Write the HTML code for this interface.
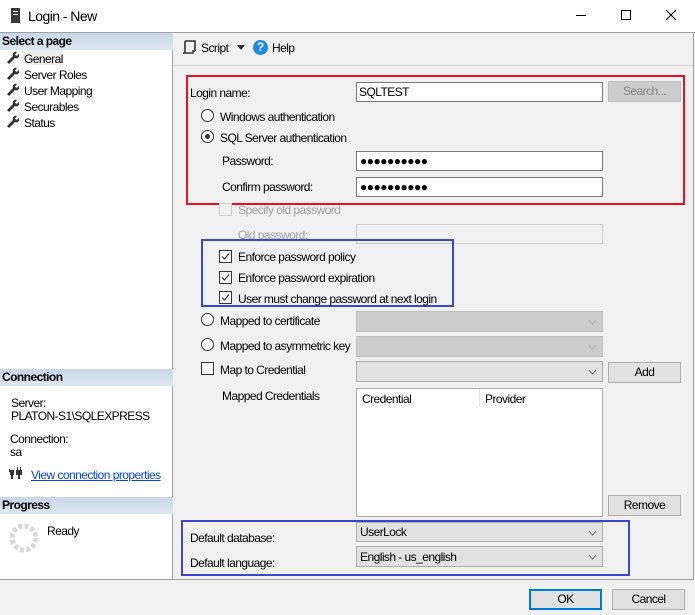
<!DOCTYPE html>
<html><head><style>
*{margin:0;padding:0;box-sizing:border-box}
body{width:695px;height:615px;overflow:hidden;background:#f0f0f0;font-family:"Liberation Sans",sans-serif;font-size:12px;color:#000;position:relative;letter-spacing:-0.55px}
.a{position:absolute;white-space:nowrap}
.t{position:absolute;white-space:nowrap;line-height:14px;margin-top:1px}
.inp{position:absolute;background:#fff;border:1px solid #7a7a7a}
.dis{position:absolute;background:#f0f0f0;border:1px solid #ccc}
.cmb{position:absolute;background:#e1e1e1;border:1px solid #adadad}
.cmbd{position:absolute;background:#cccccc;border:1px solid #bfbfbf}
.btn{position:absolute;background:#e1e1e1;border:1px solid #adadad;text-align:center;line-height:19px}
.rad{position:absolute;width:13px;height:13px;border:1px solid #333;border-radius:50%;background:#fff}
.chk{position:absolute;width:13px;height:13px;border:1px solid #333;background:#fff}
.hdr{position:absolute;left:0;width:173px;height:17px;background:linear-gradient(#c6d7e8,#dde7f1);font-weight:bold;padding-left:2px;line-height:17px}
.arr{position:absolute;right:6px;top:5px;width:7px;height:7px;border-right:1px solid #555;border-bottom:1px solid #555;transform:rotate(45deg) scale(.8)}
</style></head><body>
<div class="a" style="left:0;top:0;width:695px;height:33px;background:#fff;border-bottom:1px solid #a0a0a0"></div>
<div class="a" style="left:11px;top:8px;width:9px;height:15px;background:#3a3a3a"></div>
<div class="a" style="left:13px;top:11px;width:5px;height:1px;background:#fff"></div>
<div class="a" style="left:13px;top:14px;width:5px;height:1px;background:#fff"></div>
<div class="t" style="left:28px;top:7px;font-size:14px;line-height:16px">Login - New</div>
<div class="a" style="left:576px;top:15px;width:10px;height:1px;background:#000"></div>
<div class="a" style="left:621px;top:10px;width:10px;height:10px;border:1px solid #000"></div>
<svg class="a" style="left:665px;top:9px" width="12" height="12"><path d="M1 1L11 11M11 1L1 11" stroke="#000" stroke-width="1.1"/></svg>

<div class="a" style="left:0;top:33px;width:173px;height:546px;background:#fff;border-right:1px solid #a0a0a0"></div>
<div class="hdr" style="top:33px">Select a page</div>
<div class="a" style="left:22px;top:50px;width:41px;height:15px;background:#eeeeee"></div>
<div class="t" style="left:24px;top:51px">General</div>
<div class="t" style="left:24px;top:67px">Server Roles</div>
<div class="t" style="left:24px;top:83px">User Mapping</div>
<div class="t" style="left:24px;top:99px">Securables</div>
<div class="t" style="left:24px;top:115px">Status</div>
<svg class="a" style="left:6px;top:51px" width="13" height="80">
<g fill="#333"><path d="M1 11L7 5A3 3 0 0 1 11 1L9 3.5L10.5 5L13 3A3 3 0 0 1 9 7L3 13Z"/>
<path transform="translate(0,16)" d="M1 11L7 5A3 3 0 0 1 11 1L9 3.5L10.5 5L13 3A3 3 0 0 1 9 7L3 13Z"/>
<path transform="translate(0,32)" d="M1 11L7 5A3 3 0 0 1 11 1L9 3.5L10.5 5L13 3A3 3 0 0 1 9 7L3 13Z"/>
<path transform="translate(0,48)" d="M1 11L7 5A3 3 0 0 1 11 1L9 3.5L10.5 5L13 3A3 3 0 0 1 9 7L3 13Z"/>
<path transform="translate(0,64)" d="M1 11L7 5A3 3 0 0 1 11 1L9 3.5L10.5 5L13 3A3 3 0 0 1 9 7L3 13Z"/></g></svg>
<div class="hdr" style="top:369px">Connection</div>
<div class="t" style="left:11px;top:395px">Server:</div>
<div class="t" style="left:11px;top:408px">PLATON-S1\SQLEXPRESS</div>
<div class="t" style="left:10px;top:431px">Connection:</div>
<div class="t" style="left:10px;top:444px">sa</div>
<svg class="a" style="left:9px;top:467px" width="14" height="13"><g fill="#333"><rect x="1" y="3" width="4" height="5"/><rect x="2" y="8" width="2" height="4"/><rect x="7" y="3" width="6" height="5"/><rect x="9" y="8" width="2" height="4"/><rect x="8" y="0" width="1" height="3"/><rect x="11" y="0" width="1" height="3"/><rect x="0" y="2" width="1" height="3"/></g></svg>
<div class="t" style="left:31px;top:467px;color:#0645d8;text-decoration:underline">View connection properties</div>
<div class="hdr" style="top:497px">Progress</div>
<svg class="a" style="left:9px;top:523px" width="30" height="30"><circle cx="15" cy="15" r="12" fill="none" stroke="#d8d8d8" stroke-width="5" stroke-dasharray="4 2.3"/></svg>
<div class="t" style="left:47px;top:523px">Ready</div>

<div class="a" style="left:174px;top:65px;width:520px;height:1px;background:#d0d0d0"></div>
<svg class="a" style="left:182px;top:40px" width="14" height="15"><path d="M3 1H13V11M3 1V13H1M3 13H11V11H13" fill="none" stroke="#333" stroke-width="1.6"/></svg>
<div class="t" style="left:201px;top:40px">Script</div>
<svg class="a" style="left:237px;top:45px" width="8" height="5"><path d="M0 0H8L4 5Z" fill="#333"/></svg>
<div class="a" style="left:253px;top:40px;width:15px;height:15px;border-radius:50%;background:#1e88e5;color:#fff;font-weight:bold;font-size:12px;text-align:center;line-height:15px;letter-spacing:0">?</div>
<div class="t" style="left:272px;top:40px">Help</div>

<div class="a" style="left:186px;top:75px;width:499px;height:130px;border:2px solid #e81123"></div>
<div class="t" style="left:190px;top:85px">Login name:</div>
<div class="inp" style="left:356px;top:82px;width:247px;height:20px"><span class="t" style="left:2px;top:1px">SQLTEST</span></div>
<div class="btn" style="left:608px;top:81px;width:73px;height:21px;background:#cccccc;border-color:#bfbfbf;color:#838383">Search...</div>
<div class="rad" style="left:201px;top:109px"></div>
<div class="t" style="left:220px;top:109px">Windows authentication</div>
<div class="rad" style="left:201px;top:130px"><div class="a" style="left:3px;top:3px;width:5px;height:5px;border-radius:50%;background:#333"></div></div>
<div class="t" style="left:220px;top:130px">SQL Server authentication</div>
<div class="t" style="left:222px;top:153px">Password:</div>
<div class="inp" style="left:356px;top:151px;width:247px;height:20px"><span class="t" style="left:3px;top:1px;letter-spacing:-0.5px">●●●●●●●●●●</span></div>
<div class="t" style="left:222px;top:179px">Confirm password:</div>
<div class="inp" style="left:356px;top:177px;width:247px;height:20px"><span class="t" style="left:3px;top:1px;letter-spacing:-0.5px">●●●●●●●●●●</span></div>

<div class="chk" style="left:219px;top:203px;border-color:#ccc;background:#f0f0f0"></div>
<div class="t" style="left:238px;top:202px;color:#a0a0a0">Specify old password</div>
<div class="t" style="left:238px;top:227px;color:#a0a0a0">Old password:</div>
<div class="dis" style="left:356px;top:224px;width:247px;height:20px"></div>

<div class="a" style="left:201px;top:239px;width:253px;height:68px;border:2px solid #3b46c9"></div>
<svg class="a" style="left:219px;top:250px" width="13" height="55"><g fill="#fff" stroke="#333"><rect x=".5" y=".5" width="12" height="12"/><rect x=".5" y="21.5" width="12" height="12"/><rect x=".5" y="41.5" width="12" height="12"/></g><g fill="none" stroke="#333" stroke-width="1.2"><path d="M3 6.5L5.5 9L10 3.5"/><path d="M3 27.5L5.5 30L10 24.5"/><path d="M3 47.5L5.5 50L10 44.5"/></g></svg>
<div class="t" style="left:238px;top:249px">Enforce password policy</div>
<div class="t" style="left:238px;top:270px">Enforce password expiration</div>
<div class="t" style="left:238px;top:291px">User must change password at next login</div>

<div class="rad" style="left:201px;top:313px"></div>
<div class="t" style="left:220px;top:313px">Mapped to certificate</div>
<div class="cmbd" style="left:356px;top:311px;width:247px;height:21px"><div class="arr" style="border-color:#aaa"></div></div>
<div class="rad" style="left:201px;top:338px"></div>
<div class="t" style="left:220px;top:338px">Mapped to asymmetric key</div>
<div class="cmbd" style="left:356px;top:336px;width:247px;height:21px"><div class="arr" style="border-color:#aaa"></div></div>
<div class="chk" style="left:201px;top:362px"></div>
<div class="t" style="left:220px;top:362px">Map to Credential</div>
<div class="cmb" style="left:356px;top:361px;width:247px;height:21px"><div class="arr"></div></div>
<div class="btn" style="left:608px;top:362px;width:73px;height:21px">Add</div>
<div class="t" style="left:222px;top:388px">Mapped Credentials</div>
<div class="a" style="left:356px;top:388px;width:247px;height:129px;background:#fff;border:1px solid #adadad"></div>
<div class="t" style="left:362px;top:391px">Credential</div>
<div class="a" style="left:479px;top:389px;width:1px;height:18px;background:#e5e5e5"></div>
<div class="t" style="left:485px;top:391px">Provider</div>
<div class="btn" style="left:608px;top:495px;width:73px;height:21px">Remove</div>

<div class="a" style="left:181px;top:520px;width:449px;height:56px;border:2px solid #3b46c9"></div>
<div class="t" style="left:190px;top:530px">Default database:</div>
<div class="cmb" style="left:356px;top:522px;width:247px;height:20px"><span class="t" style="left:3px;top:1px">UserLock</span><div class="arr"></div></div>
<div class="t" style="left:190px;top:555px">Default language:</div>
<div class="cmb" style="left:356px;top:546px;width:247px;height:21px"><span class="t" style="left:3px;top:2px">English - us_english</span><div class="arr"></div></div>

<div class="a" style="left:693px;top:33px;width:1px;height:546px;background:#a0a0a0"></div>
<div class="a" style="left:0;top:579px;width:694px;height:1px;background:#a0a0a0"></div>
<div class="btn" style="left:529px;top:589px;width:73px;height:21px;border:2px solid #0078d7;line-height:17px">OK</div>
<div class="btn" style="left:612px;top:589px;width:73px;height:21px">Cancel</div>
</body></html>
